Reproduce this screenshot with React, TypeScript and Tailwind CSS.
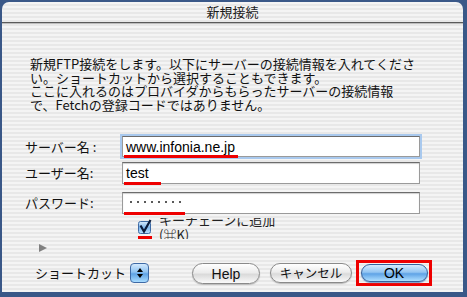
const jp = "font-['Noto_Sans_CJK_JP',sans-serif]";
const latin = "font-['Liberation_Sans','Noto_Sans_CJK_JP',sans-serif]";
const stripes =
  'bg-[image:repeating-linear-gradient(180deg,#f4f4f4_0px,#f4f4f4_2px,#e8e8e8_2px,#e8e8e8_4px)]';

function Mark({ w }: { w: number }) {
  // red annotation line under the typed value
  return (
    <span
      className="absolute left-[1px] bottom-[-2px] h-[3px] bg-[#ee0000]"
      style={{ width: w }}
    />
  );
}

function Field({
  label,
  value,
  mark,
  focused,
  h,
  mt,
  dots,
}: {
  label: string;
  value: string;
  mark: number;
  focused?: boolean;
  h: string;
  mt: string;
  dots?: boolean;
}) {
  return (
    <div className={`flex items-center ${mt}`}>
      <div className={`w-[97px] text-[13px] text-[#111] ${jp}`}>{label}</div>
      <div
        className={`relative w-[298px] ${h} bg-white flex items-center pl-[3px] border border-[#9a9a9a] border-t-[#6c6c6c] ${
          focused ? 'shadow-[0_0_0_2px_#a9c9ee] border-[#7f9fcb]' : 'shadow-[inset_0_1px_1px_#cfcfcf]'
        }`}
      >
        {dots ? (
          <span className="flex gap-[5px] pl-[4px] -mt-[3px]">
            {Array.from({ length: 8 }).map((_, i) => (
              <span key={i} className="w-[2px] h-[2px] bg-[#222] rounded-full" />
            ))}
          </span>
        ) : (
          <span className={`text-[14px] text-black leading-none ${latin}`}>{value}</span>
        )}
        <Mark w={mark} />
      </div>
    </div>
  );
}

function Checkbox() {
  return (
    <svg width="15" height="15" viewBox="0 0 15 15">
      <defs>
        <linearGradient id="cb" x1="0" y1="0" x2="0" y2="1">
          <stop offset="0" stopColor="#d9ecfd" />
          <stop offset="0.5" stopColor="#7fb6ec" />
          <stop offset="1" stopColor="#b8e0ff" />
        </linearGradient>
      </defs>
      <rect x="0.5" y="2.5" width="12" height="12" rx="2" fill="url(#cb)" stroke="#3d6aa5" />
      <path d="M2.5 6.5 L6 12.5 L12.5 1" fill="none" stroke="#0a1a3a" strokeWidth="2.2" />
    </svg>
  );
}

export default function App() {
  return (
    <div className="w-[467px] h-[297px] bg-[#3a5888] pt-[2px] pl-[2px] pr-[4px] pb-[5px]">
      <div className={`h-full rounded-t-[7px] overflow-hidden flex flex-col ${stripes}`}>
        <div className="h-[21px] flex items-center justify-center border-b border-[#5a5a5a] shadow-[0_1px_0_#bdbdbd]">
          <span className={`text-[13px] text-[#1a1a1a] ${jp}`}>新規接続</span>
        </div>

        <div className="flex flex-col pl-[23px]">
          <p className={`ml-[5px] mt-[34px] text-[13px] leading-[13.5px] text-[#111] whitespace-nowrap ${jp}`}>
            新規FTP接続をします。以下にサーバーの接続情報を入れてくださ
            <br />
            い。ショートカットから選択することもできます。
            <br />
            ここに入れるのはプロバイダからもらったサーバーの接続情報
            <br />
            で、Fetchの登録コードではありません。
          </p>

          <Field label="サーバー名 :" value="www.infonia.ne.jp" mark={114} focused h="h-[21px]" mt="mt-[25px]" />
          <Field label="ユーザー名:" value="test" mark={37} h="h-[22px]" mt="mt-[5px]" />
          <Field label="パスワード:" value="" dots mark={61} h="h-[22px]" mt="mt-[8px]" />

          <div className="mt-[4px] h-[21px] flex items-start ml-[113px]">
            <div className="relative mt-[1px]">
              <Checkbox />
              <span className="absolute left-0 top-[17px] w-[14px] h-[3px] bg-[#ee0000]" />
            </div>
            <div className="ml-[6px] h-[21px] overflow-hidden">
              <div className={`-mt-[6px] text-[13px] leading-[15px] text-[#222] ${jp}`}>
                キーチェーンに追加
                <br />
                (⌘K)
              </div>
            </div>
          </div>

          <div className="mt-[4px] ml-[14px] h-[9px] flex items-center">
            <span className="w-0 h-0 border-y-[4.5px] border-y-transparent border-l-[8px] border-l-[#808080]" />
          </div>

          <div className="mt-[8px] h-[26px] flex items-center">
            <span className={`ml-[10px] w-[95px] text-[13px] text-[#111] ${jp}`}>ショートカット</span>
            <div className="w-[19px] h-[20px] rounded-[4px] border border-[#3e6aa6] bg-[linear-gradient(180deg,#d3e9fd_0%,#8ec2f1_45%,#5ea2e5_55%,#a9dcff_100%)] flex flex-col items-center justify-center gap-[2px]">
              <span className="w-0 h-0 border-x-[3px] border-x-transparent border-b-[4px] border-b-black" />
              <span className="w-0 h-0 border-x-[3px] border-x-transparent border-t-[4px] border-t-black" />
            </div>
            <button className={`ml-[43px] w-[68px] h-[21px] rounded-full border border-[#8a8a8a] bg-[linear-gradient(180deg,#ffffff_0%,#ececec_45%,#dadada_55%,#fafafa_100%)] shadow-[0_1px_1px_#bbb] text-[14px] text-[#111] ${latin}`}>
              Help
            </button>
            <button className={`ml-[10px] w-[82px] h-[20px] rounded-full border border-[#8a8a8a] bg-[linear-gradient(180deg,#ffffff_0%,#ececec_45%,#dadada_55%,#fafafa_100%)] shadow-[0_1px_1px_#bbb] text-[12.5px] text-[#111] ${jp}`}>
              キャンセル
            </button>
            <div className="ml-[4px] w-[76px] h-[26px] border-[3px] border-[#ee0000] flex items-center justify-center">
              <button className={`w-[67px] h-[18px] rounded-full border border-[#35619c] bg-[linear-gradient(180deg,#d5eafd_0%,#93c5f2_45%,#5fa3e6_55%,#b0e0ff_100%)] shadow-[0_1px_1px_#7a9cc9] text-[14px] text-black leading-none ${latin}`}>
                OK
              </button>
            </div>
          </div>
        </div>
      </div>
    </div>
  );
}
